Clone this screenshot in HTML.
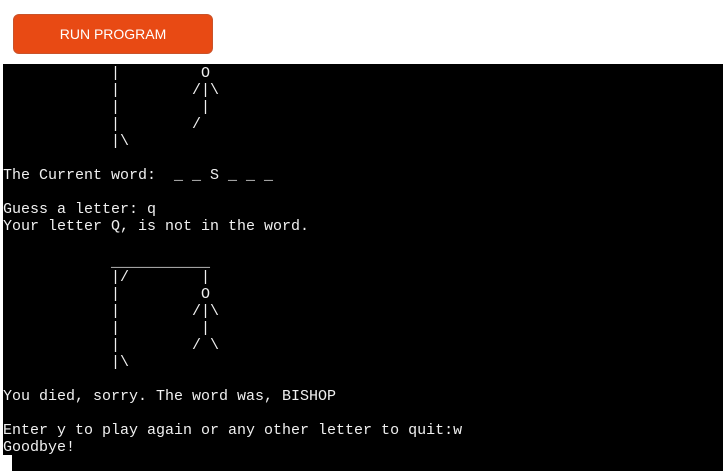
<!DOCTYPE html>
<html><head><style>
body{margin:0;width:723px;height:471px;background:#fff;position:relative;overflow:hidden}
.btn{position:absolute;left:13px;top:14px;width:198px;height:38px;background:#e84a14;border:1px solid #c9532a;border-radius:6px;color:#fff;font:14px "Liberation Sans",sans-serif;display:flex;align-items:center;justify-content:center;box-sizing:content-box}
.term{position:absolute;left:3px;top:64px;width:720px;height:407px;background:#000}
pre{margin:0;padding-top:1px;color:#f0f0f0;font:15px/17px "Liberation Mono",monospace;white-space:pre}
.u{position:relative;top:2px}
.cur{position:absolute;left:0;top:391px;width:9px;height:16px;background:#fff}
</style></head><body>
<div class="btn">RUN PROGRAM</div>
<div class="term"><pre>            |         O
            |        /|\
            |         |
            |        /
            |\

The Current word:  _ _ S _ _ _

Guess a letter: q
Your letter Q, is not in the word.

            <span class="u">___________</span>
            |/        |
            |         O
            |        /|\
            |         |
            |        / \
            |\

You died, sorry. The word was, BISHOP

Enter y to play again or any other letter to quit:w
Goodbye!</pre><div class="cur"></div></div>
</body></html>
